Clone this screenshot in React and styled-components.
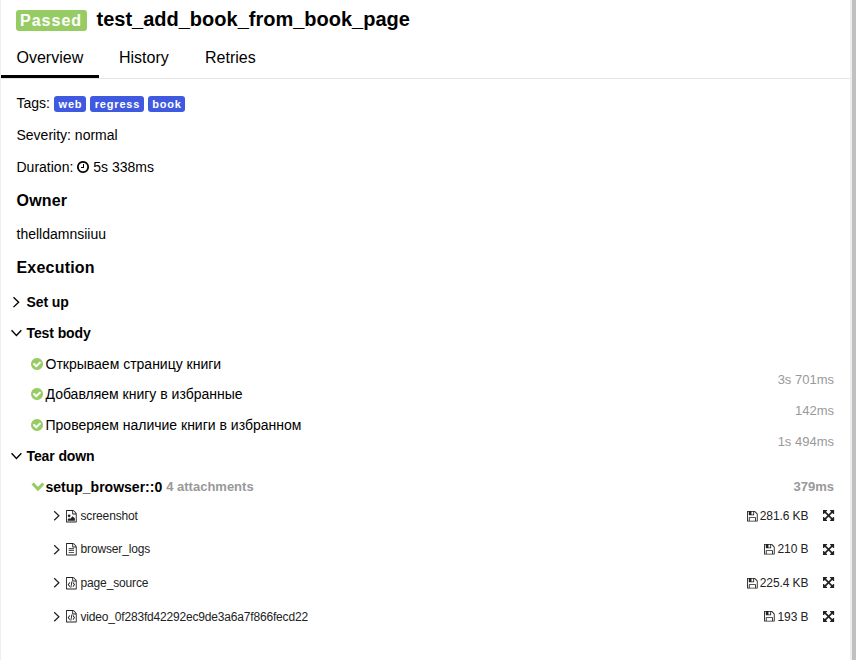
import React from "react";
import styled, { createGlobalStyle } from "styled-components";

const GlobalStyle = createGlobalStyle`
  * { box-sizing: border-box; }
  body { margin: 0; background: #fff; }
`;

const Page = styled.div`
  display: flex;
  width: 856px;
  height: 660px;
  overflow: hidden;
  border-left: 1px solid #eceff4;
  font-family: "Liberation Sans", Arial, sans-serif;
  font-size: 14px;
  color: #000;
  white-space: nowrap;
`;
const Content = styled.main`
  flex: 1;
  min-width: 0;
  display: flex;
  flex-direction: column;
`;
const Gutter = styled.div`
  width: 2px;
  background: #eee;
`;
const Scrollbar = styled.div`
  width: 4px;
  background: #c1c1c1;
`;
const Header = styled.header`
  display: flex;
  align-items: center;
  gap: 9.5px;
  height: 39px;
  padding-left: 15px;
`;
const Status = styled.span`
  height: 21px;
  width: 71px;
  margin-top: 2px;
  border-radius: 3px;
  background: #97cc64;
  color: #fff;
  font-size: 16px;
  font-weight: 700;
  line-height: 21px;
  letter-spacing: 1.02px;
  padding-left: 4px;
`;
const Title = styled.h1`
  margin: 0 0 2px;
  font-size: 20px;
  line-height: 24px;
`;
const Tabs = styled.nav`
  display: flex;
  height: 40px;
  border-bottom: 1px solid #e5e5e5;
`;
const Tab = styled.a`
  height: 39px;
  width: ${(p) => p.$width};
  padding-left: ${(p) => p.$indent};
  border-bottom: 3px solid ${(p) => (p.$active ? "#000" : "transparent")};
  font-size: 16px;
  line-height: 37px;
`;
const Field = styled.div`
  display: flex;
  align-items: center;
  height: 32px;
  padding-left: 15.5px;
`;
const Fields = styled.section`
  padding: 8px 0 1px;
`;
const Tag = styled.span`
  width: ${(p) => p.$width};
  height: 16px;
  margin-right: 4px;
  border-radius: 3px;
  background: #3f5ae0;
  color: #fff;
  font-size: 11px;
  font-weight: 700;
  line-height: 16px;
  letter-spacing: 0.8px;
  text-align: center;
  padding-left: 1px;
`;
const TagList = styled.div`
  display: flex;
  margin-left: 4px;
  padding-top: 1px;
`;
const Heading = styled.h2`
  margin: 0;
  padding-left: 15.5px;
  height: ${(p) => p.$height};
  line-height: ${(p) => p.$height};
  font-size: 16px;
  letter-spacing: 0.2px;
`;
const Stage = styled.div`
  display: flex;
  align-items: center;
  height: 31px;
  padding-left: 9px;
  font-weight: 700;
  letter-spacing: -0.1px;
`;
const StageArrow = styled.span`
  width: 16.5px;
  display: flex;
  padding-top: 1px;
`;
const Steps = styled.div`
  display: flex;
  flex-direction: column;
`;
const Step = styled.div`
  display: flex;
  align-items: center;
  height: ${(p) => p.$height || "31px"};
  padding: 0 16px 0 29.5px;
  font-weight: ${(p) => (p.$bold ? 700 : 400)};
`;
const StepIcon = styled.span`
  display: flex;
  width: 15px;
  color: #97cc64;
`;
const Duration = styled.span`
  margin-left: auto;
  padding-top: ${(p) => p.$drop || "0"};
  font-size: 13px;
  line-height: 16px;
  color: #999;
`;
const Note = styled.span`
  margin-left: 4px;
  font-size: 13px;
  color: #999;
`;
const Attachment = styled.div`
  display: flex;
  align-items: center;
  height: 33.6px;
  padding: 0 15.5px 0 50px;
  font-size: 12px;
  color: #222;
`;
const FileName = styled.span`
  letter-spacing: ${(p) => (p.$long ? "-0.18px" : "-0.14px")};
`;
const Attachments = styled.div`
  margin-top: -3px;
`;
const FileIcon = styled.span`
  display: flex;
  width: 15px;
  margin-left: 3.5px;
`;
const Size = styled.span`
  display: flex;
  align-items: center;
  gap: 2.5px;
  margin-left: auto;
  margin-right: 15px;
  letter-spacing: -0.1px;
`;

const sheet =
  "M1468 380q28 28 48 76t20 88v1152q0 40-28 68t-68 28h-1344q-40 0-68-28t-28-68v-1600q0-40 28-68t68-28h896q40 0 88 20t76 48zm-444-244v376h376q-10-29-22-41l-313-313q-12-12-41-22zm384 1528v-1024h-416q-40 0-68-28t-28-68v-416h-768v1536h1280z";
const shapes = {
  clock: "M896 544v448q0 14-9 23t-23 9h-320q-14 0-23-9t-9-23v-64q0-14 9-23t23-9h224v-352q0-14 9-23t23-9h64q14 0 23 9t9 23zm416 352q0-148-73-273t-198-198-273-73-273 73-198 198-73 273 73 273 198 198 273 73 273-73 198-198 73-273zm224 0q0 209-103 385.5t-279.5 279.5-385.5 103-385.5-103-279.5-279.5-103-385.5 103-385.5 279.5-279.5 385.5-103 385.5 103 279.5 279.5 103 385.5z",
  check: "M1284 734q0-28-18-46l-91-90q-19-19-45-19t-45 19l-408 407-226-226q-19-19-45-19t-45 19l-91 90q-18 18-18 46 0 27 18 45l362 362q19 19 45 19 27 0 46-19l543-543q18-18 18-45zm252 162q0 209-103 385.5t-279.5 279.5-385.5 103-385.5-103-279.5-279.5-103-385.5 103-385.5 279.5-279.5 385.5-103 385.5 103 279.5 279.5 103 385.5z",
  image: sheet + "M1280 1216v320h-1024v-192l192-192 128 128 384-384zm-832-192q-80 0-136-56t-56-136 56-136 136-56 136 56 56 136-56 136-136 56z",
  text: sheet + "M384 800q0-14 9-23t23-9h704q14 0 23 9t9 23v64q0 14-9 23t-23 9h-704q-14 0-23-9t-9-23v-64zm736 224q14 0 23 9t9 23v64q0 14-9 23t-23 9h-704q-14 0-23-9t-9-23v-64q0-14 9-23t23-9h704zm0 256q14 0 23 9t9 23v64q0 14-9 23t-23 9h-704q-14 0-23-9t-9-23v-64q0-14 9-23t23-9h704z",
  code: sheet + "M480 768q8-11 21-12.5t24 6.5l51 38q11 8 12.5 21t-6.5 24l-182 243 182 243q8 11 6.5 24t-12.5 21l-51 38q-11 8-24 6.5t-21-12.5l-226-301q-14-19 0-38zm802 301q14 19 0 38l-226 301q-8 11-21 12.5t-24-6.5l-51-38q-11-8-12.5-21t6.5-24l182-243-182-243q-8-11-6.5-24t12.5-21l51-38q11-8 24-6.5t21 12.5zm-620 461q-13-2-20.5-13t-5.5-24l138-831q2-13 13-20.5t24-5.5l63 10q13 2 20.5 13t5.5 24l-138 831q-2 13-13 20.5t-24 5.5z",
  save: "M384 1536h768v-384h-768v384zm896 0h128v-896q0-14-10-38.5t-20-34.5l-281-281q-10-10-34-20t-39-10v416q0 40-28 68t-68 28h-576q-40 0-68-28t-28-68v-416h-128v1280h128v-416q0-40 28-68t68-28h832q40 0 68 28t28 68v416zm-384-928v-320q0-13-9.5-22.5t-22.5-9.5h-192q-13 0-22.5 9.5t-9.5 22.5v320q0 13 9.5 22.5t22.5 9.5h192q13 0 22.5-9.5t9.5-22.5zm640 32v928q0 40-28 68t-68 28h-1344q-40 0-68-28t-28-68v-1344q0-40 28-68t68-28h928q40 0 88 20t76 48l280 280q28 28 48 76t20 88z",
  expand: "M1283 541l-355 355 355 355 144-144q29-31 70-14 39 17 39 59v448q0 26-19 45t-45 19h-448q-42 0-59-40-17-39 14-69l144-144-355-355-355 355 144 144q31 30 14 69-17 40-59 40h-448q-26 0-45-19t-19-45v-448q0-42 40-59 39-17 69 14l144 144 355-355-355-355-144 144q-19 19-45 19-12 0-24-5-40-17-40-59v-448q0-26 19-45t45-19h448q42 0 59 40 17 39-14 69l-144 144 355 355 355-355-144-144q-31-30-14-69 17-40 59-40h448q26 0 45 19t19 45v448q0 42-39 59-13 5-25 5-26 0-45-19z",
};

const Svg = styled.svg`
  display: block;
  flex: none;
  overflow: visible;
`;
function Icon({ name, size }) {
  return (
    <Svg width={(size * 1536) / 1792} height={size} viewBox="0 0 1536 1792" fill="currentColor">
      <path d={shapes[name]} />
    </Svg>
  );
}
function Chevron({ open, bold, small }) {
  const s = small ? 11 : 12;
  const d = open ? "M1.4 3 L5.9 7.7 L10.4 3" : "M3.2 1.2 L7.9 5.7 L3.2 10.2";
  return (
    <Svg width={bold ? 13 : s} height={bold ? 13 : s} viewBox="0 0 11 11" fill="none" stroke="currentColor" strokeWidth={bold ? 2.6 : 1.25}>
      <path d={d} />
    </Svg>
  );
}

const steps = [
  ["Открываем страницу книги", "3s 701ms", "31px", "32px"],
  ["Добавляем книгу в избранные", "142ms", "30px", "33px"],
  ["Проверяем наличие книги в избранном", "1s 494ms", "31px", "34px"],
];
const files = [
  ["image", "screenshot", "281.6 KB"],
  ["text", "browser_logs", "210 B"],
  ["code", "page_source", "225.4 KB"],
  ["code", "video_0f283fd42292ec9de3a6a7f866fecd22", "193 B"],
];
const ClockSlot = styled.span`
  display: flex;
  margin: 0 4px;
`;

export default function App() {
  return (
    <Page>
      <GlobalStyle />
      <Content>
        <Header>
          <Status>Passed</Status>
          <Title>test_add_book_from_book_page</Title>
        </Header>
        <Tabs>
          <Tab $active $width="98px" $indent="15.5px">Overview</Tab>
          <Tab $width="86px" $indent="20px">History</Tab>
          <Tab $width="90px" $indent="20px">Retries</Tab>
        </Tabs>
        <Fields>
          <Field>
            Tags:
            <TagList>
              <Tag $width="32px">web</Tag>
              <Tag $width="54px">regress</Tag>
              <Tag $width="37px">book</Tag>
            </TagList>
          </Field>
          <Field>Severity: normal</Field>
          <Field>
            Duration:
            <ClockSlot><Icon name="clock" size={14} /></ClockSlot>
            5s 338ms
          </Field>
        </Fields>
        <Heading $height="34px">Owner</Heading>
        <Field>thelldamnsiiuu</Field>
        <Heading $height="36px">Execution</Heading>
        <Stage><StageArrow><Chevron /></StageArrow>Set up</Stage>
        <Stage><StageArrow><Chevron open /></StageArrow>Test body</Stage>
        <Steps>
          {steps.map(([name, time, height, drop]) => (
            <Step key={name} $height={height}>
              <StepIcon><Icon name="check" size={14} /></StepIcon>
              {name}
              <Duration $drop={drop}>{time}</Duration>
            </Step>
          ))}
        </Steps>
        <Stage><StageArrow><Chevron open /></StageArrow>Tear down</Stage>
        <Step $bold>
          <StepIcon><Chevron open bold /></StepIcon>
          setup_browser::0
          <Note>4 attachments</Note>
          <Duration>379ms</Duration>
        </Step>
        <Attachments>
          {files.map(([kind, name, size]) => (
            <Attachment key={name}>
              <Chevron small />
              <FileIcon><Icon name={kind} size={12.5} /></FileIcon>
              <FileName $long={name.length > 20}>{name}</FileName>
              <Size><Icon name="save" size={12.5} />{size}</Size>
              <Icon name="expand" size={13} />
            </Attachment>
          ))}
        </Attachments>
      </Content>
      <Gutter />
      <Scrollbar />
    </Page>
  );
}
